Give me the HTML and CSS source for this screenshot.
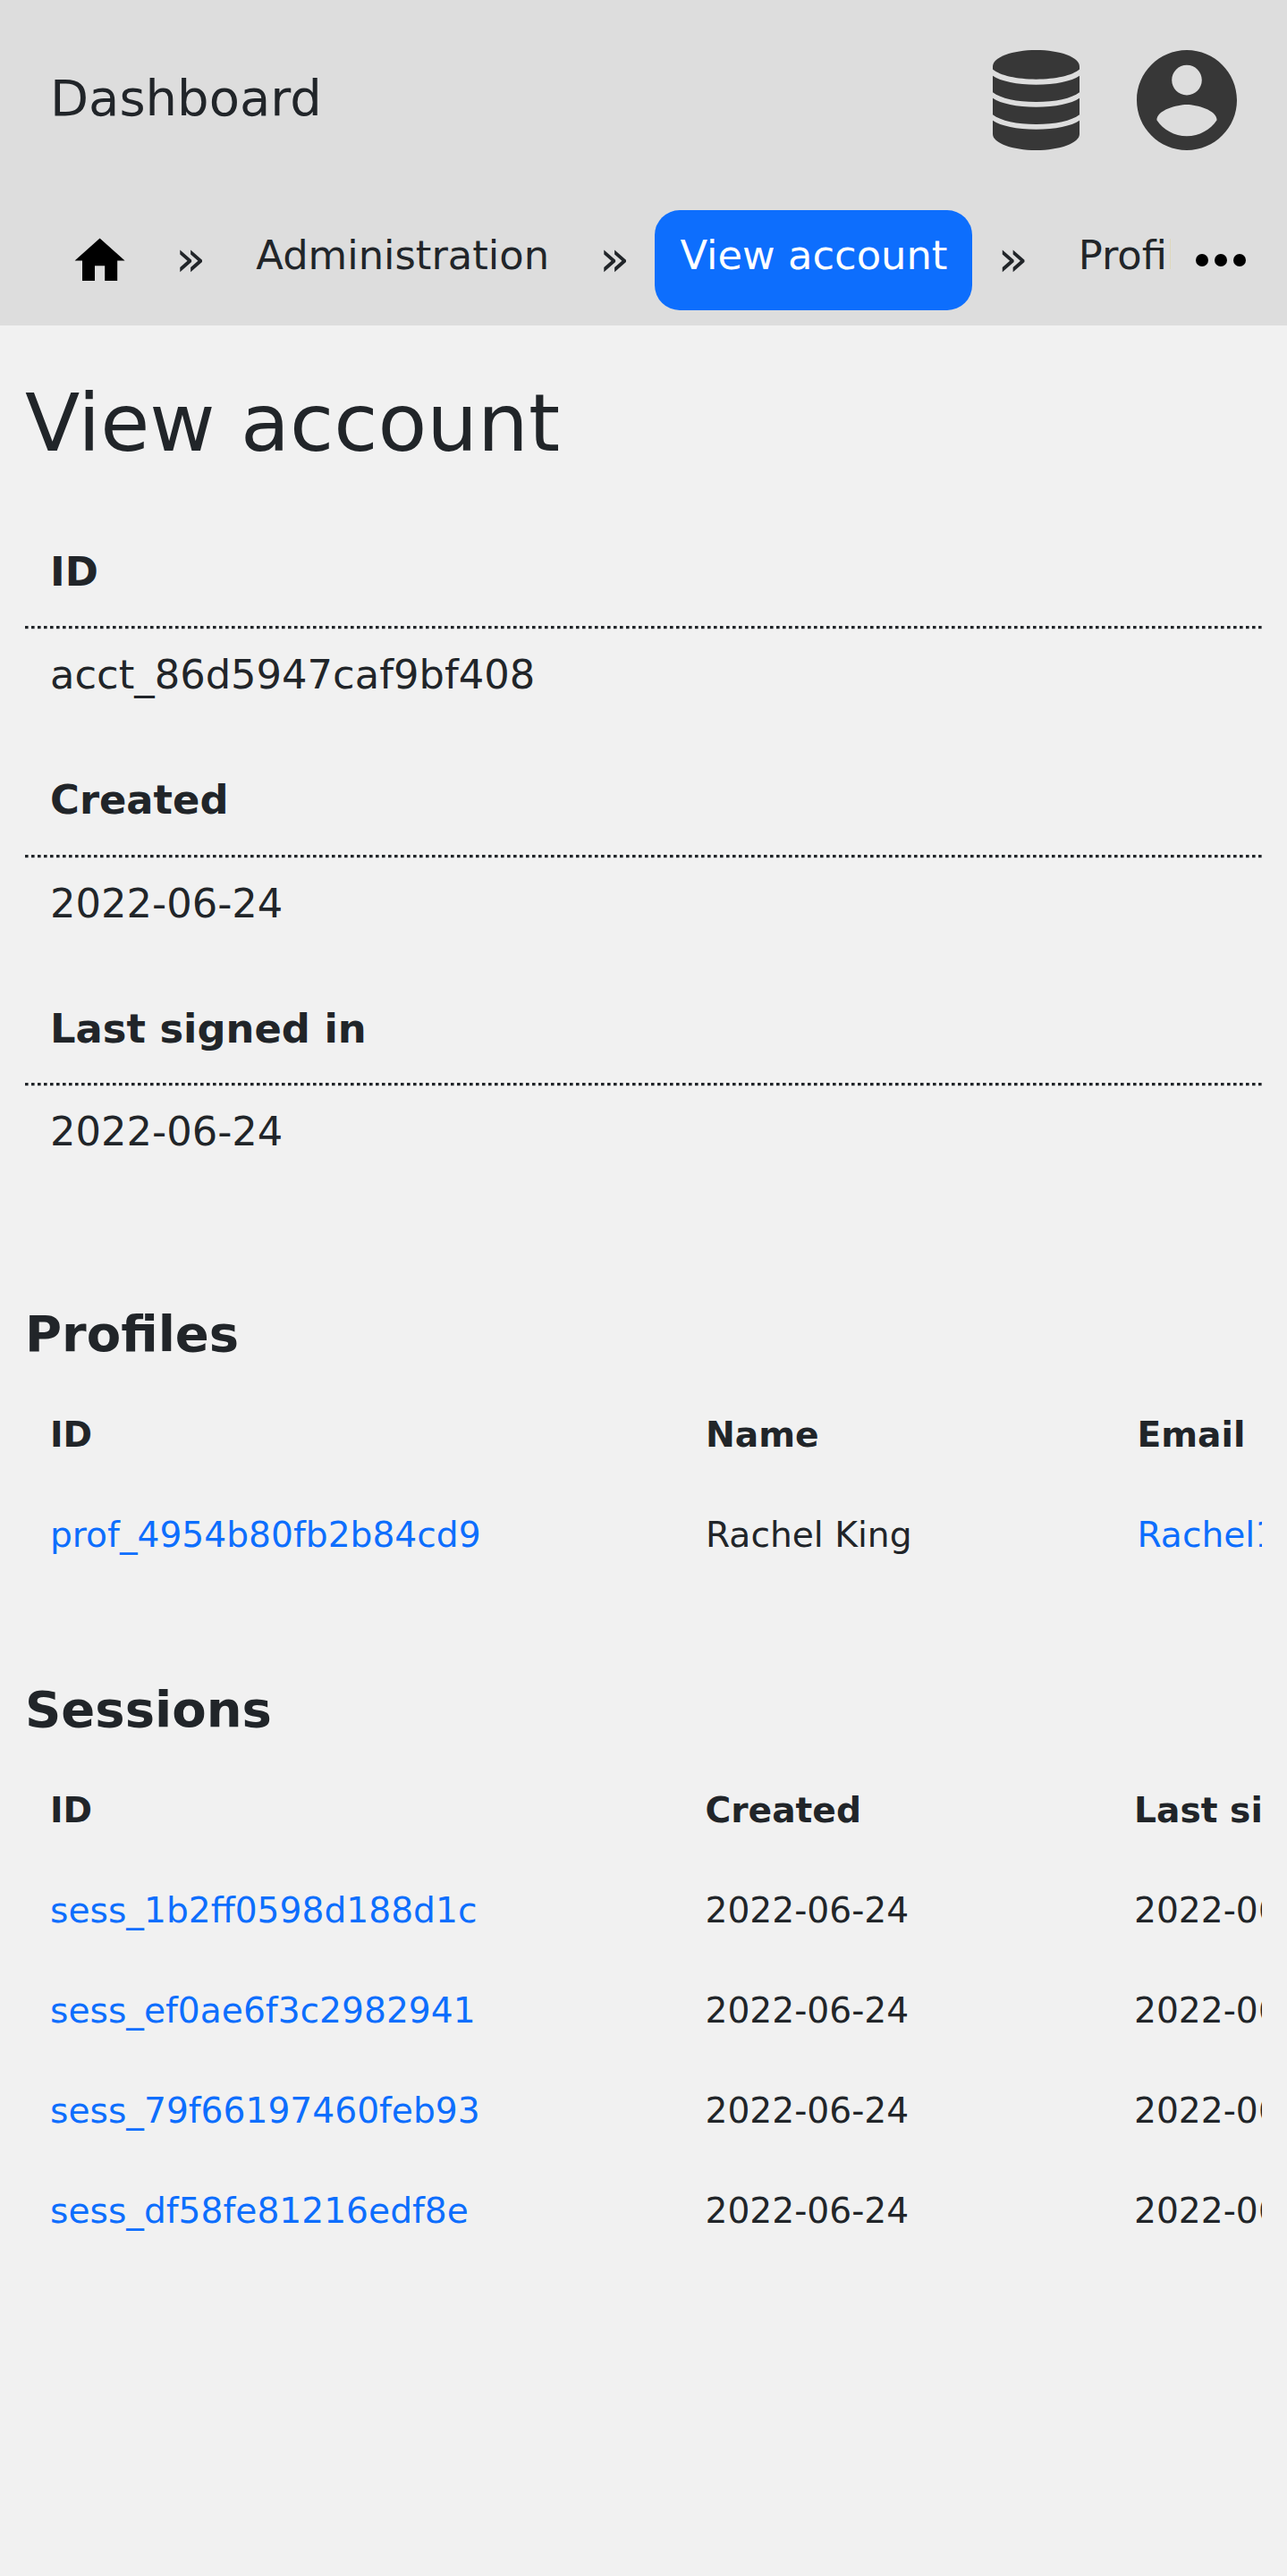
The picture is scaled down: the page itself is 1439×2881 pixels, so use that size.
FILE: index.html
```html
<!DOCTYPE html>
<html lang="en">
<head>
<meta charset="utf-8">
<title>View account</title>
<link rel="stylesheet" href="styles.css">
</head>
<body>
<header class="header">
  <div class="topbar">
    <a class="brand">Dashboard</a>
    <svg class="icon-database" viewBox="0 0 97 112"><path d="M0 18.300C0 8 22 0 48.500 0S97 8 97 18.300V21.600C89 28.500 70 32.700 48.500 32.700S8 28.500 0 21.600z"/><path d="M0 28.700C9 34.800 27 38.700 48.500 38.700S88 34.800 97 28.700V47.200C88 54 70 58 48.500 58S9 54 0 47.200z"/><path d="M0 53.700C9 59.800 27 63.700 48.500 63.700S88 59.800 97 53.700V72.200C88 79 70 83 48.500 83S9 79 0 72.200z"/><path d="M0 78.700C9 84.800 27 88.700 48.500 88.700S88 84.800 97 78.700V94C97 104 75 112 48.500 112S0 104 0 94z"/></svg>
    <svg class="icon-account" viewBox="2 2 20 20"><path d="M12 2C6.480 2 2 6.480 2 12s4.480 10 10 10 10-4.480 10-10S17.520 2 12 2zm0 3c1.660 0 3 1.340 3 3s-1.340 3-3 3-3-1.340-3-3 1.340-3 3-3zm0 14.200c-2.500 0-4.710-1.280-6-3.220.030-1.990 4-3.080 6-3.080 1.990 0 5.970 1.090 6 3.080-1.290 1.940-3.500 3.220-6 3.220z"/></svg>
  </div>
  <nav class="navbar">
    <div class="crumbs">
      <a class="home"><svg class="icon-home" viewBox="0 0 24 24"><path d="M10 20v-6h4v6h5v-8h3L12 3 2 12h3v8z"/></svg></a>
      <span class="sep">»</span>
      <a class="crumb">Administration</a>
      <span class="sep">»</span>
      <a class="crumb active">View account</a>
      <span class="sep">»</span>
      <a class="crumb">Profile</a>
    </div>
    <svg class="icon-more" viewBox="0 0 24 24"><circle cx="6" cy="12" r="2"/><circle cx="12" cy="12" r="2"/><circle cx="18" cy="12" r="2"/></svg>
  </nav>
</header>
<main class="content">
  <h1 class="title">View account</h1>
  <dl class="details">
    <div class="detail"><dt>ID</dt><dd>acct_86d5947caf9bf408</dd></div>
    <div class="detail"><dt>Created</dt><dd>2022-06-24</dd></div>
    <div class="detail"><dt>Last signed in</dt><dd>2022-06-24</dd></div>
  </dl>
  <section class="block">
    <h2 class="subtitle">Profiles</h2>
    <div class="table profiles">
      <div class="row head"><span>ID</span><span>Name</span><span>Email</span></div>
      <div class="row"><a>prof_4954b80fb2b84cd9</a><span>Rachel King</span><a>Rachel1</a></div>
    </div>
  </section>
  <section class="block">
    <h2 class="subtitle">Sessions</h2>
    <div class="table sessions">
      <div class="row head"><span>ID</span><span>Created</span><span>Last signed in</span></div>
      <div class="row"><a>sess_1b2ff0598d188d1c</a><span>2022-06-24</span><span>2022-06-24</span></div>
      <div class="row"><a>sess_ef0ae6f3c2982941</a><span>2022-06-24</span><span>2022-06-24</span></div>
      <div class="row"><a>sess_79f66197460feb93</a><span>2022-06-24</span><span>2022-06-24</span></div>
      <div class="row"><a>sess_df58fe81216edf8e</a><span>2022-06-24</span><span>2022-06-24</span></div>
    </div>
  </section>
</main>
</body>
</html>
```
FILE: styles.css
```css
* { box-sizing: border-box; }
body {
  margin: 0;
  min-height: 2881px;
  background: #f1f1f1;
  color: #212529;
  font-family: "DejaVu Sans", sans-serif;
  font-size: 44.8px;
}
h1, h2, dl, dt, dd { margin: 0; }

.header { height: 364px; background: #ddd; }
.topbar {
  display: flex;
  align-items: center;
  height: 224px;
  padding: 0 56.5px 0 56px;
  fill: #373737;
}
.brand { flex: 1; font-size: 56px; line-height: 84px; padding-bottom: 4px; }
.icon-database { width: 97px; height: 112px; margin-right: 63.5px; }
.icon-account { width: 112px; height: 112px; }

.navbar { display: flex; align-items: center; padding: 10.5px 32px 0 56px; }
.crumbs {
  display: flex;
  width: 1253px;
  margin-right: 14px;
  overflow: hidden;
  white-space: nowrap;
}
.crumb, .home, .sep { flex: none; height: 112px; line-height: 102px; }
.crumb { padding: 0 28px; border-radius: 28px; }
.active { background: #0d6efd; color: #fff; }
.home { width: 112px; padding: 23.600px 22.400px; }
.icon-home { display: block; width: 67.2px; height: 67.2px; }
.sep { width: 34.3px; margin: 0 28px; font-size: 56px; line-height: 108px; }
.icon-more { flex: none; width: 84px; height: 84px; }

.content { padding: 55px 28px 0; }
.title { font-size: 89.6px; font-weight: 400; line-height: 108px; }
.details { margin-top: 51.8px; padding-bottom: .6px; }
.detail { height: 255.5px; }
dt { height: 121.3px; padding-left: 28px; font-weight: 700; line-height: 121px; }
dd { padding-left: 28px; line-height: 101px; }
dd::before {
  content: "";
  display: block;
  height: 4px;
  margin-left: -28px;
  background:
    linear-gradient(transparent 3px, rgba(241, 241, 241, .8) 3px),
    repeating-linear-gradient(90deg, #212529 0 3px, rgba(33, 37, 41, .6) 3px 4px, transparent 4px 7px);
}

.block { height: 420px; padding-top: 104px; }
.subtitle { font-size: 56px; font-weight: 700; line-height: 84px; }
.table { margin-top: 15px; overflow: hidden; font-size: 39.2px; white-space: nowrap; }
.row { display: grid; padding-left: 28px; height: 112px; line-height: 112px; }
.profiles .row { grid-template-columns: 733px 482.5px 400px; }
.sessions .row { grid-template-columns: 732.5px 479.5px 400px; }
.head { font-weight: 700; }
.row a { color: #0d6efd; }
```
